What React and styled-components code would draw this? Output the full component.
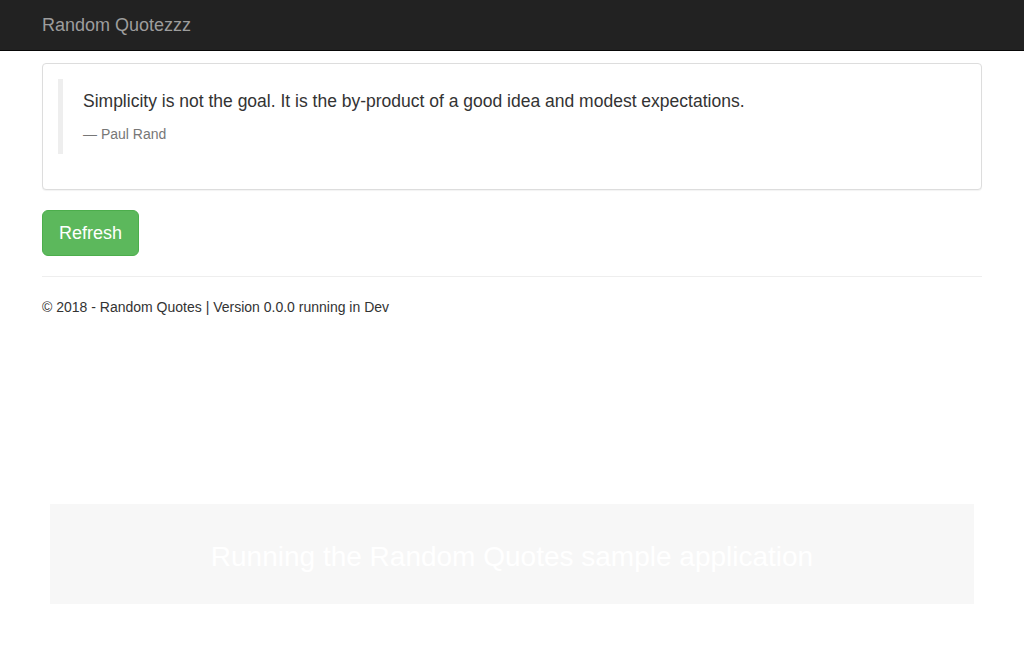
import React from 'react';
import styled, { createGlobalStyle } from 'styled-components';

const GlobalStyle = createGlobalStyle`
  * {
    box-sizing: border-box;
  }

  html,
  body {
    margin: 0;
    padding: 0;
  }

  body {
    font-family: "Liberation Sans", Arial, Helvetica, sans-serif;
    font-size: 14px;
    line-height: 1.42857143;
    color: #333;
    background: #fff;
  }
`;

const Page = styled.div`
  min-height: 100vh;
  display: flex;
  flex-direction: column;
`;

const Navbar = styled.nav`
  height: 51px;
  background-color: #222;
  border-bottom: 1px solid #080808;
`;

const Container = styled.div`
  width: 970px;
  margin: 0 auto;
  padding: 0 15px;
`;

const Brand = styled.a`
  display: inline-block;
  padding: 15px 0;
  font-size: 18px;
  line-height: 20px;
  color: #9d9d9d;
  text-decoration: none;
`;

const Body = styled(Container)`
  padding-top: 12px;
`;

const Panel = styled.div`
  margin-bottom: 20px;
  background: #fff;
  border: 1px solid #ddd;
  border-radius: 4px;
  box-shadow: 0 1px 1px rgba(0, 0, 0, 0.05);
`;

const PanelBody = styled.div`
  padding: 15px;
`;

const Quote = styled.blockquote`
  margin: 0 0 20px;
  padding: 10px 20px;
  border-left: 5px solid #eee;
  font-size: 17.5px;

  p {
    margin: 0 0 10px;
  }

  footer {
    display: block;
    font-size: 80%;
    line-height: 1.42857143;
    color: #777;
  }

  footer::before {
    content: '\\2014 \\00A0';
  }
`;

const Button = styled.button`
  display: inline-block;
  padding: 10px 16px;
  font-family: inherit;
  font-size: 18px;
  line-height: 1.3333333;
  color: #fff;
  background-color: #5cb85c;
  border: 1px solid #4cae4c;
  border-radius: 6px;
  cursor: pointer;
`;

const Rule = styled.hr`
  margin: 20px 0;
  border: 0;
  border-top: 1px solid #eee;
`;

const Footer = styled.footer`
  p {
    margin: 0 0 10px;
  }
`;

const Banner = styled.div`
  margin: auto 50px 50px;
  height: 100px;
  padding-top: 5px;
  display: flex;
  align-items: center;
  justify-content: center;
  background-color: #f7f7f7;
  color: #fff;
  font-size: 28px;
`;

const App = () => {
  return (
    <Page>
      <GlobalStyle />
      <Navbar>
        <Container>
          <Brand href="#">Random Quotezzz</Brand>
        </Container>
      </Navbar>
      <Body>
        <Panel>
          <PanelBody>
            <Quote>
              <p>Simplicity is not the goal. It is the by-product of a good idea and modest expectations.</p>
              <footer>Paul Rand</footer>
            </Quote>
          </PanelBody>
        </Panel>
        <Button>Refresh</Button>
        <Rule />
        <Footer>
          <p>© 2018 - Random Quotes | Version 0.0.0 running in Dev</p>
        </Footer>
      </Body>
      <Banner>Running the Random Quotes sample application</Banner>
    </Page>
  );
};

export default App;
